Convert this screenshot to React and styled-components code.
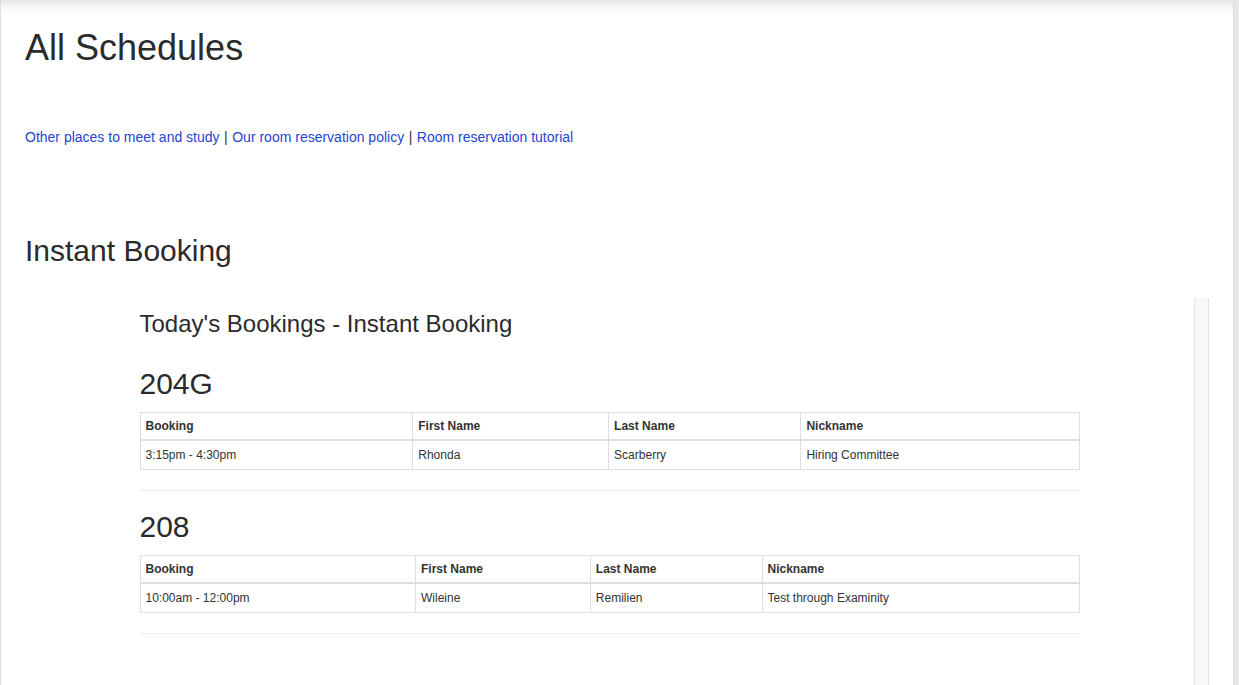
import React from "react";
import styled, { createGlobalStyle } from "styled-components";

const GlobalStyle = createGlobalStyle`
  html, body {
    margin: 0;
    padding: 0;
    height: 100%;
    overflow: hidden;
    background: #ffffff;
  }
  body {
    font-family: "Liberation Sans", Arial, sans-serif;
    color: #333333;
  }
  *, *::before, *::after {
    box-sizing: border-box;
  }
`;

const Page = styled.div`
  display: flex;
  height: 685px;
`;

const Main = styled.main`
  flex: 1;
  display: flex;
  flex-direction: column;
  border-left: 1px solid #dcdcdc;
  background: linear-gradient(to bottom, #e6e6e6 0px, #f6f6f6 7px, #ffffff 15px);
  padding: 28px 24px 0 24px;
  overflow: hidden;
`;

const OuterTrack = styled.div`
  width: 6px;
  flex: none;
  background: #e7e7e7;
  border-left: 1px solid #dedede;
`;

const PageTitle = styled.h1`
  margin: 0;
  font-size: 36px;
  line-height: 40px;
  font-weight: 400;
  color: #2b2b2b;
`;

const LinkRow = styled.p`
  margin: 59px 0 0 0;
  font-size: 14px;
  line-height: 20px;
  color: #333;
`;

const NavLink = styled.a`
  color: #1f45d3;
  text-decoration: none;
`;

const Sep = styled.span`
  color: #333;
  padding: 0 4.5px;
`;

const SectionTitle = styled.h2`
  margin: 84px 0 0 0;
  font-size: 30px;
  line-height: 40px;
  font-weight: 400;
  color: #2b2b2b;
`;

const Frame = styled.div`
  margin-top: 27px;
  display: flex;
  flex: 1;
  min-height: 420px;
`;

const FrameBody = styled.div`
  flex: 1;
  display: flex;
  justify-content: center;
`;

const ScrollTrack = styled.div`
  width: 15px;
  flex: none;
  background: #f8f8f8;
  border-left: 1px solid #e2e2e2;
  border-right: 1px solid #e2e2e2;
`;

const Container = styled.div`
  width: 940px;
  padding-top: 11px;
`;

const FrameTitle = styled.h3`
  margin: 0;
  font-size: 24px;
  line-height: 30px;
  font-weight: 400;
  color: #2b2b2b;
`;

const RoomTitle = styled.h4`
  margin: ${(p) => (p.$first ? "25px" : "15px")} 0 8px 0;
  font-size: 30px;
  line-height: 40px;
  font-weight: 400;
  color: #2b2b2b;
`;

const Table = styled.table`
  width: 100%;
  border-collapse: collapse;
  font-size: 12px;
  color: #333;
`;

const Th = styled.th`
  text-align: left;
  font-weight: 700;
  padding: 4px 5px;
  line-height: 18px;
  border: 1px solid #dddddd;
  border-bottom: 2px solid #dddddd;
`;

const Td = styled.td`
  text-align: left;
  padding: 4px 5px;
  line-height: 20px;
  border: 1px solid #dddddd;
`;

const Rule = styled.hr`
  margin: 20px 0 0 0;
  border: 0;
  border-top: 1px solid #eeeeee;
  border-bottom: 1px solid #ffffff;
`;

const rooms = [
  {
    name: "204G",
    rows: [["3:15pm - 4:30pm", "Rhonda", "Scarberry", "Hiring Committee"]],
  },
  {
    name: "208",
    rows: [["10:00am - 12:00pm", "Wileine", "Remilien", "Test through Examinity"]],
  },
];

const headers = ["Booking", "First Name", "Last Name", "Nickname"];

export default function App() {
  return (
    <>
      <GlobalStyle />
      <Page>
        <Main>
          <PageTitle>All Schedules</PageTitle>
          <LinkRow>
            <NavLink href="#">Other places to meet and study</NavLink>
            <Sep>|</Sep>
            <NavLink href="#">Our room reservation policy</NavLink>
            <Sep>|</Sep>
            <NavLink href="#">Room reservation tutorial</NavLink>
          </LinkRow>
          <SectionTitle>Instant Booking</SectionTitle>
          <Frame>
            <FrameBody>
              <Container>
                <FrameTitle>Today's Bookings - Instant Booking</FrameTitle>
                {rooms.map((room, i) => (
                  <React.Fragment key={room.name}>
                    <RoomTitle $first={i === 0}>{room.name}</RoomTitle>
                    <Table>
                      <thead>
                        <tr>
                          {headers.map((h) => (
                            <Th key={h}>{h}</Th>
                          ))}
                        </tr>
                      </thead>
                      <tbody>
                        {room.rows.map((r, j) => (
                          <tr key={j}>
                            {r.map((c, k) => (
                              <Td key={k}>{c}</Td>
                            ))}
                          </tr>
                        ))}
                      </tbody>
                    </Table>
                    <Rule />
                  </React.Fragment>
                ))}
              </Container>
            </FrameBody>
            <ScrollTrack />
          </Frame>
        </Main>
        <OuterTrack />
      </Page>
    </>
  );
}
